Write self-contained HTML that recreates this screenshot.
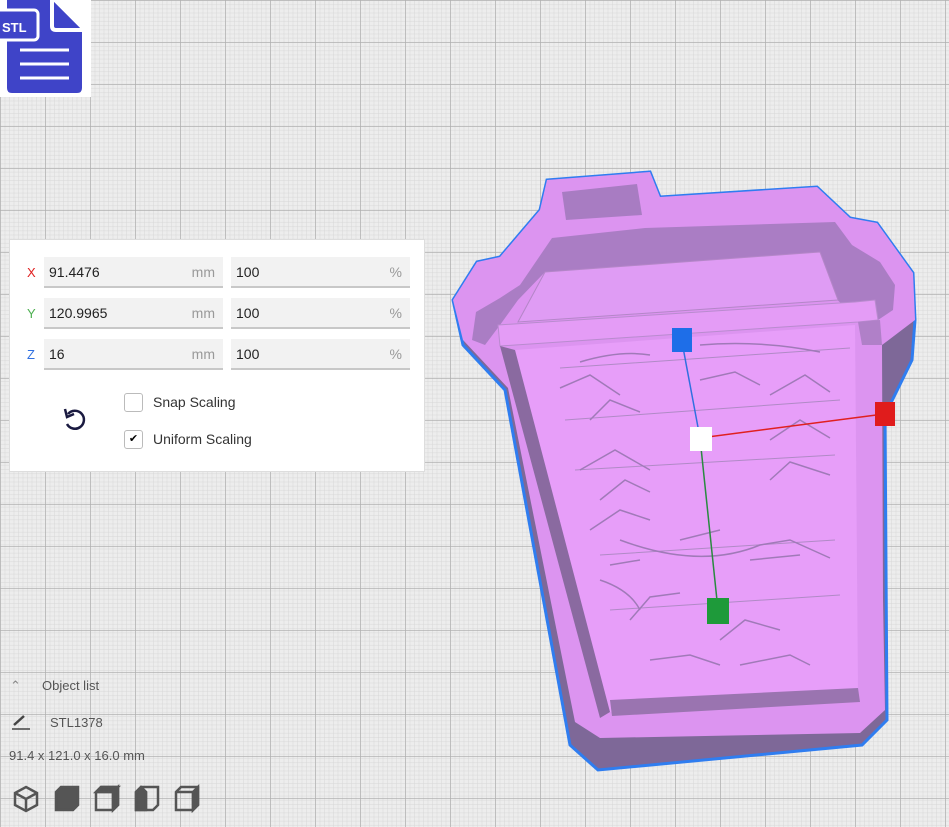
<!DOCTYPE html>
<html><head><meta charset="utf-8"><style>
body{margin:0;width:949px;height:827px;overflow:hidden;font-family:"Liberation Sans",sans-serif;
background-color:#ededed;
background-image:linear-gradient(rgba(175,175,175,.7) 1px,transparent 1px),linear-gradient(90deg,rgba(175,175,175,.7) 1px,transparent 1px),linear-gradient(rgba(215,215,215,.5) 1px,transparent 1px),linear-gradient(90deg,rgba(215,215,215,.5) 1px,transparent 1px);
background-size:45px 42px,45px 42px,4.5px 4.2px,4.5px 4.2px;position:relative}
.panel{position:absolute;left:9px;top:239px;width:416px;height:233px;background:#fff;border:1px solid #ddd;box-sizing:border-box}
.lab{position:absolute;left:17px;font-size:13px}
.f{position:absolute;height:31px;background:#f2f2f2;border-bottom:2px solid #c8c8c8;box-sizing:border-box;font-size:14px;color:#222;line-height:30px;padding-left:5px}
.f span{position:absolute;right:8px;color:#999}
.cb{position:absolute;left:114px;width:19px;height:19px;border:1px solid #bbb;border-radius:3px;box-sizing:border-box;font-size:11px;text-align:center;line-height:17px}
.ct{position:absolute;left:143px;font-size:14px;color:#333}
.bl{position:absolute;font-size:13px;color:#555}
</style></head><body>
<svg width="949" height="827" style="position:absolute;left:0;top:0">
<path d="M547 180 L650 172 L660 197 L817 187 L850 218 L877 223 L913 273 L915 320 L912 360 L885 415 L887 720 L862 745 L598 770 L570 745 L505 390 L463 345 L453 300 L477 262 L500 257 L540 210 Z" fill="#7e6898" stroke="#2f7df0" stroke-width="3"/>
<path d="M547 180 L650 172 L660 197 L817 187 L850 218 L877 223 L913 273 L915 320 L882 345 L883 600 L885 710 L860 733 L600 738 L575 722 L508 388 L463 340 L453 300 L477 262 L500 257 L540 210 Z" fill="#dc94f0"/>
<path d="M562 192 L637 184 L642 215 L566 220 Z" fill="#a87cc2"/>
<path d="M552 238 L645 228 L835 222 L852 245 L880 262 L895 285 L893 310 L878 320 L858 318 L835 298 L820 252 L545 272 L518 300 L500 325 L485 345 L472 340 L476 312 L500 298 L520 285 Z" fill="#aa7dc4"/>
<path d="M545 272 L820 252 L838 300 L518 322 Z" fill="#df9cf4" stroke="#b486c8"/>
<path d="M498 325 L855 302 L875 300 L878 320 L858 322 L500 346 Z" fill="#e49cf6" stroke="#b98bcf"/>
<path d="M515 350 L855 325 L858 692 L610 712 Z" fill="#e79ef9"/>
<path d="M500 346 L515 350 L610 712 L600 718 Z" fill="#8a6aa0"/>
<path d="M858 322 L880 320 L882 345 L862 345 Z" fill="#b080c8"/>
<path d="M610 700 L858 688 L860 702 L612 716 Z" fill="#9a74b0"/>
<path d="M560 368 L850 348 M565 420 L840 400 M575 470 L835 455 M600 555 L835 540 M610 610 L840 595" stroke="#b08ac6" stroke-width="1" fill="none"/>
<path d="M580 362 Q620 350 650 355 M700 345 Q760 340 820 352 M560 388 L590 375 L620 395 M590 420 L610 400 L640 412 M700 380 L735 372 L760 385 M770 395 L805 375 L830 392 M580 470 L615 450 L650 470 M600 500 L625 480 L650 492 M590 530 L620 510 L650 520 M770 440 L800 420 L830 438 M770 480 L790 462 L830 475 M620 540 Q700 570 760 545 L790 540 L830 558 M610 565 L640 560 M750 560 L800 555 M630 620 L650 597 L680 593 M720 640 L745 620 L780 630 M650 660 L690 655 L720 665 M740 665 L790 655 L810 665 M680 540 L720 530 M600 580 Q630 590 640 610" stroke="#a07ab8" stroke-width="1.5" fill="none"/>
<path d="M682 342 L700 438" stroke="#3070e0" stroke-width="1.5"/>
<path d="M700 438 L718 610" stroke="#2a8a40" stroke-width="1.5"/>
<path d="M700 438 L884 414" stroke="#e02020" stroke-width="1.5"/>
<rect x="672" y="328" width="20" height="24" fill="#1e6ee8"/>
<rect x="875" y="402" width="20" height="24" fill="#e01c1c"/>
<rect x="707" y="598" width="22" height="26" fill="#1e9a3a"/>
<rect x="690" y="427" width="22" height="24" fill="#fff"/>
</svg>
<div style="position:absolute;left:0;top:0;width:91px;height:97px;background:#fff"></div>
<svg style="position:absolute;left:0;top:0" width="91" height="97"><path d="M7 0 H52 L82 30 V88 Q82 93 77 93 H12 Q7 93 7 88 Z" fill="#3f44c8"/><path d="M52 0 V26 Q52 30 56 30 H82" fill="#3f44c8" stroke="#fff" stroke-width="4"/><rect x="-4" y="10" width="42" height="30" rx="4" fill="#3f44c8" stroke="#fff" stroke-width="3"/><text x="2" y="32" fill="#fff" font-size="13" font-weight="bold" font-family="Liberation Sans">STL</text><path d="M20 50H69M20 64H69M20 78H69" stroke="#fff" stroke-width="3"/></svg>
<div class="panel">
<div class="lab" style="top:25px;color:#e02020">X</div>
<div class="lab" style="top:66px;color:#4caf50">Y</div>
<div class="lab" style="top:107px;color:#3070e0">Z</div>
<div class="f" style="left:34px;top:17px;width:179px">91.4476<span>mm</span></div>
<div class="f" style="left:221px;top:17px;width:179px">100<span>%</span></div>
<div class="f" style="left:34px;top:58px;width:179px">120.9965<span>mm</span></div>
<div class="f" style="left:221px;top:58px;width:179px">100<span>%</span></div>
<div class="f" style="left:34px;top:99px;width:179px">16<span>mm</span></div>
<div class="f" style="left:221px;top:99px;width:179px">100<span>%</span></div>
<div class="cb" style="top:153px"></div><div class="ct" style="top:154px">Snap Scaling</div>
<div class="cb" style="top:190px">✔</div><div class="ct" style="top:191px">Uniform Scaling</div>
<svg style="position:absolute;left:52px;top:166px" width="26" height="30"><path d="M6 8 A9 9 0 1 1 5 18" fill="none" stroke="#1a1a40" stroke-width="2.5"/><path d="M3 3 L5 11 L12 8" fill="none" stroke="#1a1a40" stroke-width="2.5"/></svg>
</div>
<div class="bl" style="left:10px;top:678px;color:#888">⌃</div>
<div class="bl" style="left:42px;top:678px">Object list</div>
<svg style="position:absolute;left:11px;top:713px" width="20" height="18"><path d="M3 12 L13 3" stroke="#444" stroke-width="2.5"/><path d="M1 16 H19" stroke="#444" stroke-width="1.5"/></svg>
<div class="bl" style="left:50px;top:715px">STL1378</div>
<div class="bl" style="left:9px;top:748px">91.4 x 121.0 x 16.0 mm</div>
<svg style="position:absolute;left:12px;top:784px" width="190" height="30" fill="none" stroke="#555" stroke-width="2.5">
<path d="M14 3 L25 9 V21 L14 27 L3 21 V9 Z M3 9 L14 15 L25 9 M14 15 V27"/>
<path d="M44 8 L49 3 H66 V21 L61 26 H44 Z" fill="#555"/>
<path d="M84 8 L89 3 H106 V21 L101 26 H84 Z M84 8 H101 V26"/><path d="M84 8 L89 3 H106 L101 8 Z M101 8 L106 3 V21 L101 26 Z" fill="#555"/>
<path d="M124 8 L129 3 H146 V21 L141 26 H124 Z M129 3 L134 8 V26"/><path d="M124 8 L129 3 L134 8 V26 H124 Z" fill="#555"/>
<path d="M164 8 L169 3 H186 V21 L181 26 H164 Z M164 8 H181 V26 L186 21 V3"/><path d="M181 8 L186 3 V21 L181 26 Z" fill="#555"/>
</svg>
</body></html>
